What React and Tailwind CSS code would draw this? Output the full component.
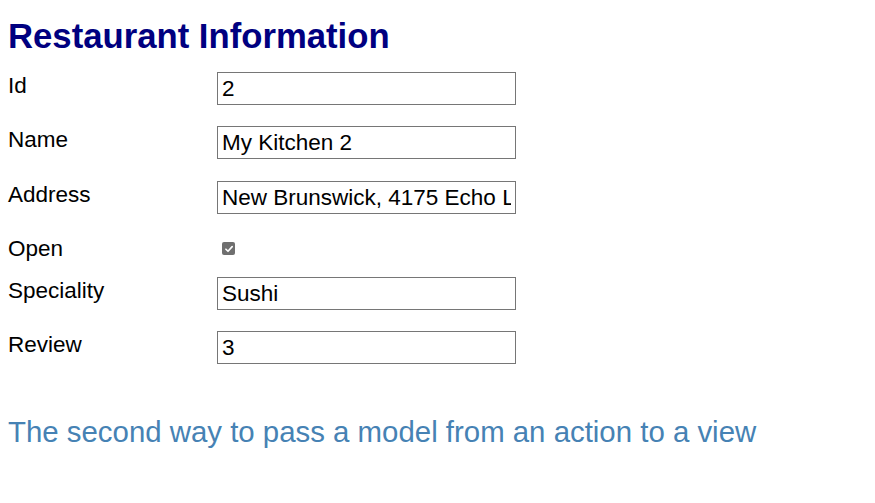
export default function App() {
  const rows = [
    { label: "Id", value: "2" },
    { label: "Name", value: "My Kitchen 2" },
    { label: "Address", value: "New Brunswick, 4175 Echo Lane" },
  ];
  const rows2 = [
    { label: "Speciality", value: "Sushi" },
    { label: "Review", value: "3" },
  ];

  return (
    <div className="min-h-screen bg-white px-[8px] text-black" style={{ fontFamily: '"Liberation Sans", Arial, sans-serif' }}>
      <h1 className="pt-[16px] text-[34.7px] font-bold leading-[40px] text-[#000080]">Restaurant Information</h1>

      <div className="mt-[16px] flex flex-col">
        {rows.map((r, i) => (
          <Field key={r.label} label={r.label} value={r.value} gap={i === 0 ? "" : i === 1 ? "mt-[21px]" : "mt-[22px]"} />
        ))}

        <div className="mt-[21px] flex h-[26px] items-start">
          <span className="w-[209px] pt-[1px] text-[22.5px] leading-[26px]">Open</span>
          <span className="mt-[7px] ml-[5px] flex h-[13px] w-[13px] items-center justify-center rounded-[2px] bg-[#6f6f6f]">
            <svg viewBox="0 0 12 12" className="h-[10px] w-[10px]">
              <path d="M2.3 6.3 L4.8 8.7 L9.8 3.2" fill="none" stroke="white" strokeWidth="2" strokeLinecap="round" strokeLinejoin="round" />
            </svg>
          </span>
        </div>

        <div className="mt-[16px] flex flex-col gap-[21px]">
          {rows2.map((r) => (
            <Field key={r.label} label={r.label} value={r.value} gap="" />
          ))}
        </div>
      </div>

      <p className="mt-[50px] text-[29.4px] leading-[36px] text-[#4682b4]">The second way to pass a model from an action to a view</p>
    </div>
  );
}

function Field({ label, value, gap }) {
  return (
    <div className={`flex items-start ${gap}`}>
      <span className="w-[209px] pt-[1px] text-[22.5px] leading-[26px]">{label}</span>
      <input
        readOnly
        value={value}
        className="h-[33px] w-[299px] border border-[#767676] bg-white px-[4px] text-[22.5px] text-black outline-none"
        style={{ fontFamily: '"Liberation Sans", Arial, sans-serif' }}
      />
    </div>
  );
}
